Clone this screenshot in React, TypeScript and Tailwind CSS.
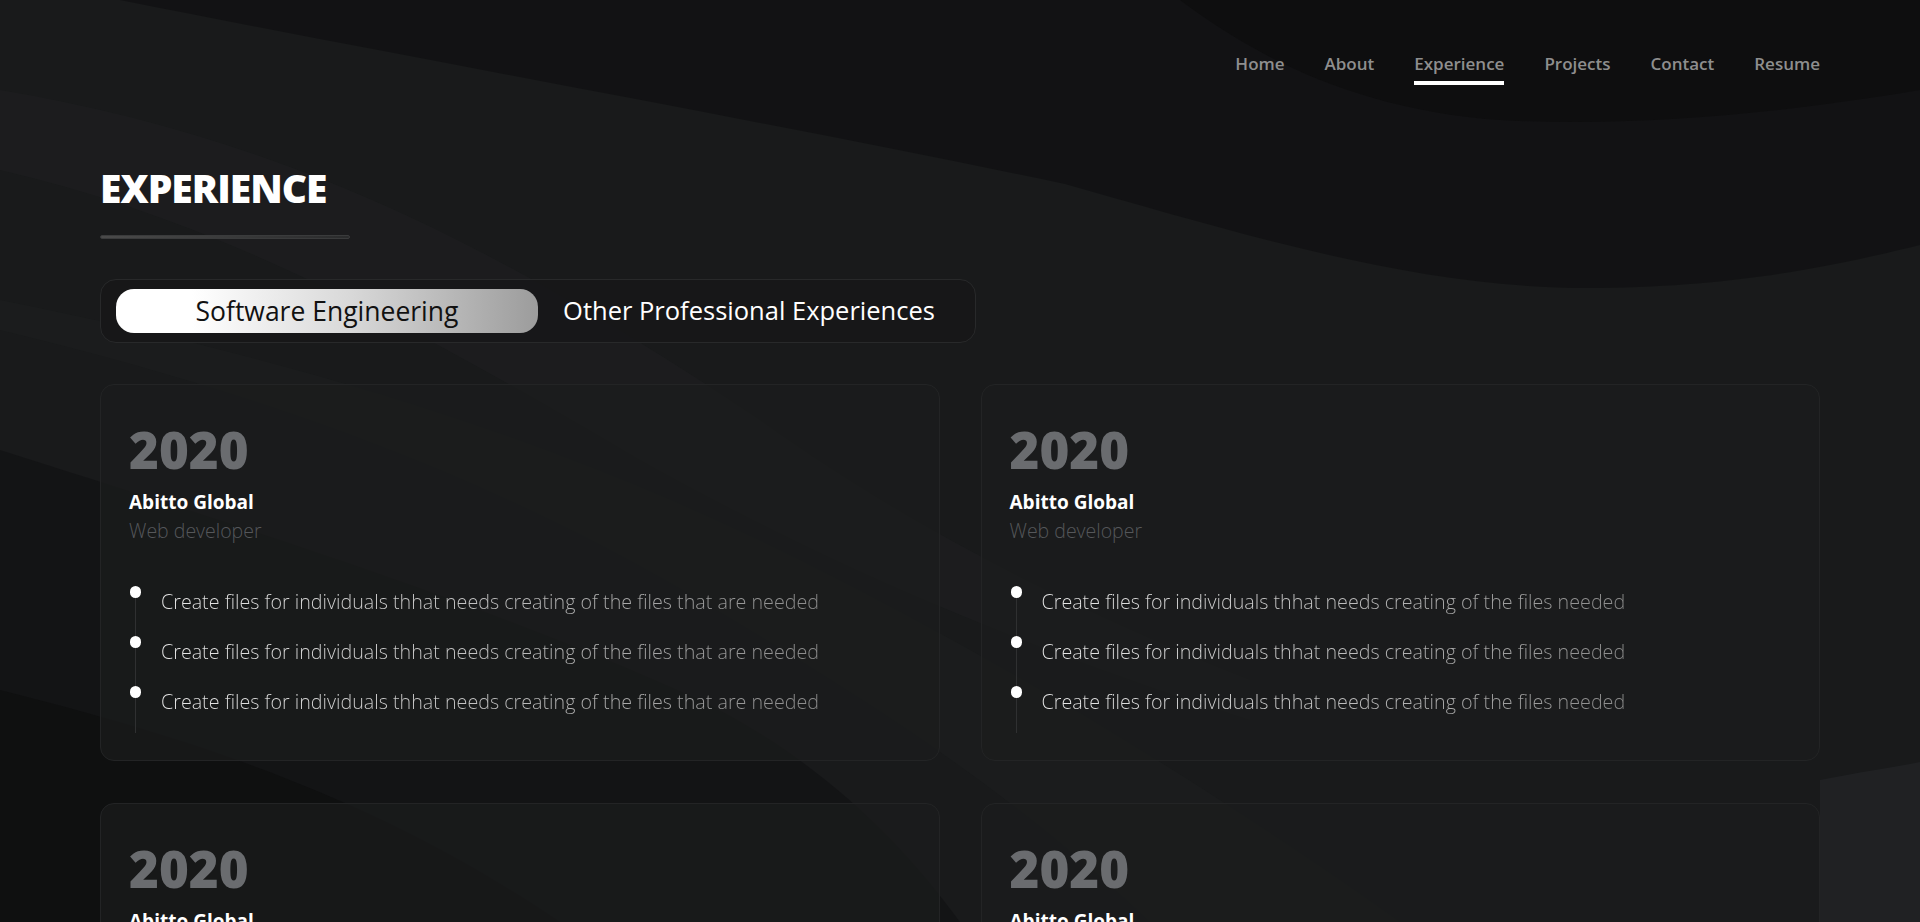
import React from 'react'

const navItems = ['Home', 'About', 'Experience', 'Projects', 'Contact', 'Resume']

const jobs = [
  { year: '2020', company: 'Abitto Global', role: 'Web developer', line: 'Create files for individuals thhat needs creating of the files that are needed' },
  { year: '2020', company: 'Abitto Global', role: 'Web developer', line: 'Create files for individuals thhat needs creating of the files needed' },
  { year: '2020', company: 'Abitto Global', role: 'Web developer', line: 'Create files for individuals thhat needs creating of the files that are needed' },
  { year: '2020', company: 'Abitto Global', role: 'Web developer', line: 'Create files for individuals thhat needs creating of the files needed' },
]

function Backdrop() {
  return (
    <svg className="pointer-events-none absolute top-0 left-0 h-[922px] w-full" viewBox="0 0 1920 922" preserveAspectRatio="none">
      {/* dark top sweep */}
      <path d="M120,0 C420,60 760,120 1065,184 C1250,236 1420,290 1600,288 C1750,286 1850,262 1920,245 L1920,0 Z" fill="#0d0d0e" opacity="0.55" />
      {/* darker ellipse top right */}
      <path d="M1180,0 C1260,60 1360,110 1500,120 C1650,128 1800,110 1920,90 L1920,0 Z" fill="#0b0b0b" opacity="0.6" />
      {/* lighter diagonal bands */}
      <path d="M0,90 C300,140 520,260 760,420 C900,520 1050,600 1250,680 L1250,720 C1000,640 820,560 640,460 C420,330 220,220 0,170 Z" fill="#222324" opacity="0.35" />
      <path d="M0,330 C250,390 480,470 700,600 C850,690 1000,780 1150,922 L1400,922 C1200,780 1000,660 800,560 C560,440 300,360 0,300 Z" fill="#202122" opacity="0.35" />
      {/* lower left dark wedge */}
      <path d="M0,450 C220,520 480,600 700,700 C820,760 900,840 960,922 L0,922 Z" fill="#0e0e0f" opacity="0.45" />
      <path d="M0,690 C200,740 380,800 560,922 L0,922 Z" fill="#0b0b0c" opacity="0.5" />
      {/* lighter lower right */}
      <path d="M1820,780 C1860,772 1890,768 1920,762 L1920,922 L1820,922 Z" fill="#25262a" opacity="0.6" />
    </svg>
  )
}

function JobCard({ job }: { job: (typeof jobs)[number] }) {
  return (
    <div className="rounded-[14px] border border-[#232425] bg-[#1b1c1d]/70 px-7 pt-[39px] pb-[27px]">
      <div className="text-[51px] font-extrabold leading-none text-[#6a6c6f]">{job.year}</div>
      <div className="mt-[14px] text-[19px] font-bold leading-[26px] text-white">{job.company}</div>
      <div className="mt-[2px] text-[19.5px] font-light leading-[28px] text-[#55575a]">{job.role}</div>
      <ul className="relative mt-[41px] flex flex-col gap-[20px] pb-[17px]">
        <span className="absolute top-[6px] bottom-0 left-[6px] w-px bg-[#2f3031]" />
        {[0, 1, 2].map((i) => (
          <li key={i} className="relative flex items-start gap-[20px]">
            <span className="ml-[1px] h-[12px] w-[11px] shrink-0 rounded-full bg-white" />
            <span className="mt-[2px] inline-block bg-[linear-gradient(90deg,#e8e8e8_0%,#c4c4c4_45%,#8a8a8a_100%)] bg-clip-text text-[19.7px] font-light leading-[28px] text-transparent">
              {job.line}
            </span>
          </li>
        ))}
      </ul>
    </div>
  )
}

export default function App() {
  return (
    <div className="relative min-h-screen overflow-hidden bg-[#191a1b] font-['Open_Sans',sans-serif] text-white">
      <Backdrop />

      <div className="relative">
        {/* Nav */}
        <header className="flex justify-end px-[100px] pt-[50px]">
          <nav className="flex gap-[40px]">
            {navItems.map((item) => (
              <a key={item} className="flex flex-col items-stretch text-[17px] font-semibold leading-[28px] text-[#8e8e8e]">
                {item}
                <span className={`mt-[3px] h-[4px] ${item === 'Experience' ? 'bg-white' : 'bg-transparent'}`} />
              </a>
            ))}
          </nav>
        </header>

        <main className="px-[100px]">
          <h2 className="mt-[83px] text-[39px] leading-none font-extrabold tracking-tight text-white">EXPERIENCE</h2>
          <div className="mt-[28px] h-[4px] w-[250px] rounded-sm border border-[#3a3b3c] bg-[linear-gradient(90deg,#4a4a4a,#2a2b2c)]" />

          {/* Tabs */}
          <div className="mt-[40px] inline-flex rounded-[16px] border border-[#28292a] bg-[#161718]/80 px-[15px] py-[9px]">
            <button className="h-[44px] w-[422px] rounded-[18px] bg-[linear-gradient(90deg,#ffffff_18%,#d9d9d9_55%,#9c9c9c_100%)] text-[26.5px] leading-none text-[#111]">
              Software Engineering
            </button>
            <button className="h-[44px] w-[422px] rounded-[18px] text-[25.5px] leading-none text-white">
              Other Professional Experiences
            </button>
          </div>

          {/* Cards */}
          <div className="mt-[41px] grid grid-cols-2 gap-x-[41px] gap-y-[42px] pb-10">
            {jobs.map((job, i) => (
              <JobCard key={i} job={job} />
            ))}
          </div>
        </main>
      </div>
    </div>
  )
}
